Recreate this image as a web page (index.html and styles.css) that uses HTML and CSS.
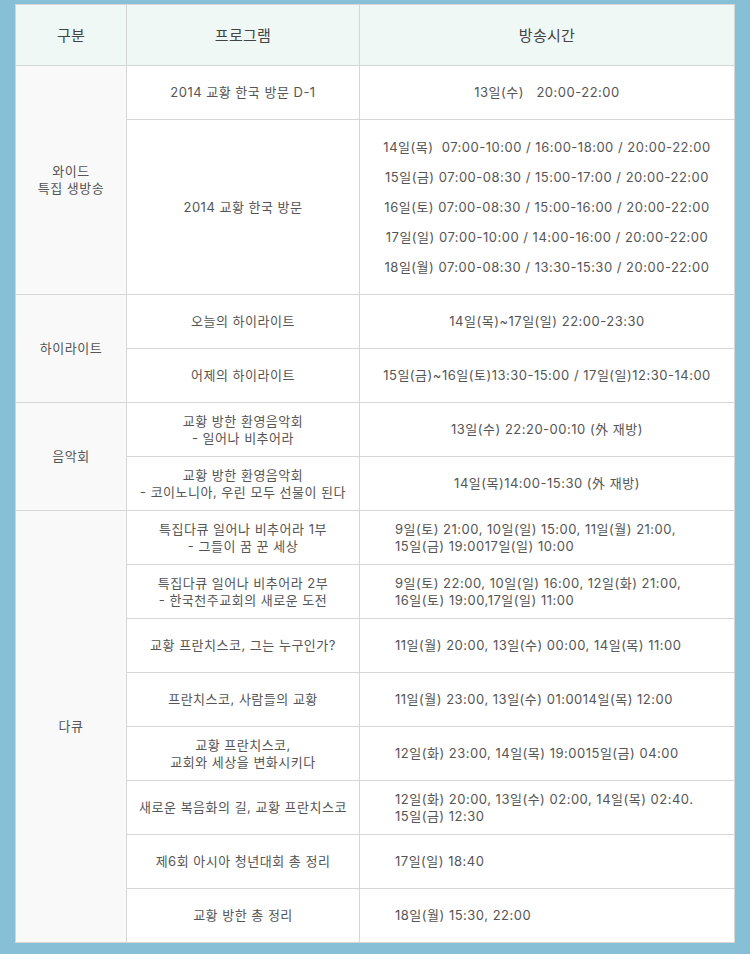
FILE: index.html
```html
<!DOCTYPE html>
<html lang="ko">
<head>
<meta charset="utf-8">
<title>방송시간</title>
<link rel="stylesheet" href="styles.css">
</head>
<body>
<div class="frame">
<table class="schedule">
  <colgroup>
    <col class="c-cat">
    <col class="c-prog">
    <col class="c-time">
  </colgroup>
  <thead>
    <tr class="head">
      <th>구분</th>
      <th>프로그램</th>
      <th>방송시간</th>
    </tr>
  </thead>
  <tbody>
    <tr class="r54">
      <td class="cat" rowspan="2">와이드<br>특집 생방송</td>
      <td>2014 교황 한국 방문 D-1</td>
      <td>13일(수)&nbsp;&nbsp; 20:00-22:00</td>
    </tr>
    <tr class="r175">
      <td>2014 교황 한국 방문</td>
      <td class="multi">14일(목)&nbsp; 07:00-10:00 / 16:00-18:00 / 20:00-22:00<br>15일(금) 07:00-08:30 / 15:00-17:00 / 20:00-22:00<br>16일(토) 07:00-08:30 / 15:00-16:00 / 20:00-22:00<br>17일(일) 07:00-10:00 / 14:00-16:00 / 20:00-22:00<br>18일(월) 07:00-08:30 / 13:30-15:30 / 20:00-22:00</td>
    </tr>
    <tr class="r54">
      <td class="cat" rowspan="2">하이라이트</td>
      <td>오늘의 하이라이트</td>
      <td>14일(목)~17일(일) 22:00-23:30</td>
    </tr>
    <tr class="r54">
      <td>어제의 하이라이트</td>
      <td>15일(금)~16일(토)13:30-15:00 / 17일(일)12:30-14:00</td>
    </tr>
    <tr class="r54">
      <td class="cat" rowspan="2">음악회</td>
      <td>교황 방한 환영음악회<br>- 일어나 비추어라</td>
      <td>13일(수) 22:20-00:10 (外 재방)</td>
    </tr>
    <tr class="r54">
      <td>교황 방한 환영음악회<br>- 코이노니아, 우린 모두 선물이 된다</td>
      <td>14일(목)14:00-15:30 (外 재방)</td>
    </tr>
    <tr class="r54">
      <td class="cat" rowspan="8">다큐</td>
      <td>특집다큐 일어나 비추어라 1부<br>- 그들이 꿈 꾼 세상</td>
      <td class="left">9일(토) 21:00, 10일(일) 15:00, 11일(월) 21:00,<br>15일(금) 19:0017일(일) 10:00</td>
    </tr>
    <tr class="r54">
      <td>특집다큐 일어나 비추어라 2부<br>- 한국천주교회의 새로운 도전</td>
      <td class="left">9일(토) 22:00, 10일(일) 16:00, 12일(화) 21:00,<br>16일(토) 19:00,17일(일) 11:00</td>
    </tr>
    <tr class="r54">
      <td>교황 프란치스코, 그는 누구인가?</td>
      <td class="left">11일(월) 20:00, 13일(수) 00:00, 14일(목) 11:00</td>
    </tr>
    <tr class="r54">
      <td>프란치스코, 사람들의 교황</td>
      <td class="left">11일(월) 23:00, 13일(수) 01:0014일(목) 12:00</td>
    </tr>
    <tr class="r54">
      <td>교황 프란치스코,<br>교회와 세상을 변화시키다</td>
      <td class="left">12일(화) 23:00, 14일(목) 19:0015일(금) 04:00</td>
    </tr>
    <tr class="r54">
      <td>새로운 복음화의 길, 교황 프란치스코</td>
      <td class="left">12일(화) 20:00, 13일(수) 02:00, 14일(목) 02:40.<br>15일(금) 12:30</td>
    </tr>
    <tr class="r54">
      <td>제6회 아시아 청년대회 총 정리</td>
      <td class="left">17일(일) 18:40</td>
    </tr>
    <tr class="r54">
      <td>교황 방한 총 정리</td>
      <td class="left">18일(월) 15:30, 22:00</td>
    </tr>
  </tbody>
</table>
</div>
</body>
</html>
```

FILE: styles.css
```css
html, body {
  margin: 0;
  padding: 0;
}

body {
  background: #87bfd6;
  font-family: Inter, "Noto Sans CJK KR", "Noto Sans", sans-serif;
}

.frame {
  background: #87bfd6;
  padding: 4px 16px 11px 15px;
}

.schedule {
  width: 719px;
  border-collapse: collapse;
  table-layout: fixed;
  background: #ffffff;
  border: 1px solid #c6c6c6;
  color: #555555;
  font-size: 13px;
  line-height: 17px;
  letter-spacing: 0.5px;
}

.c-cat { width: 111px; }
.c-prog { width: 233px; }
.c-time { width: 375px; }

.schedule th,
.schedule td {
  border: 1px solid #d6d6d6;
  padding: 0;
  text-align: center;
  vertical-align: middle;
  font-weight: normal;
}

.head th {
  background: #eff8f5;
  color: #444444;
  font-size: 15px;
  height: 60px;
  letter-spacing: 0.3px;
}

.r54 td { height: 53px; }
.r175 td { height: 174px; }

.schedule td.cat {
  background: #f9f9f9;
}

.schedule td.multi {
  line-height: 30px;
}

.schedule td.left {
  text-align: left;
  padding-left: 35px;
}
```
